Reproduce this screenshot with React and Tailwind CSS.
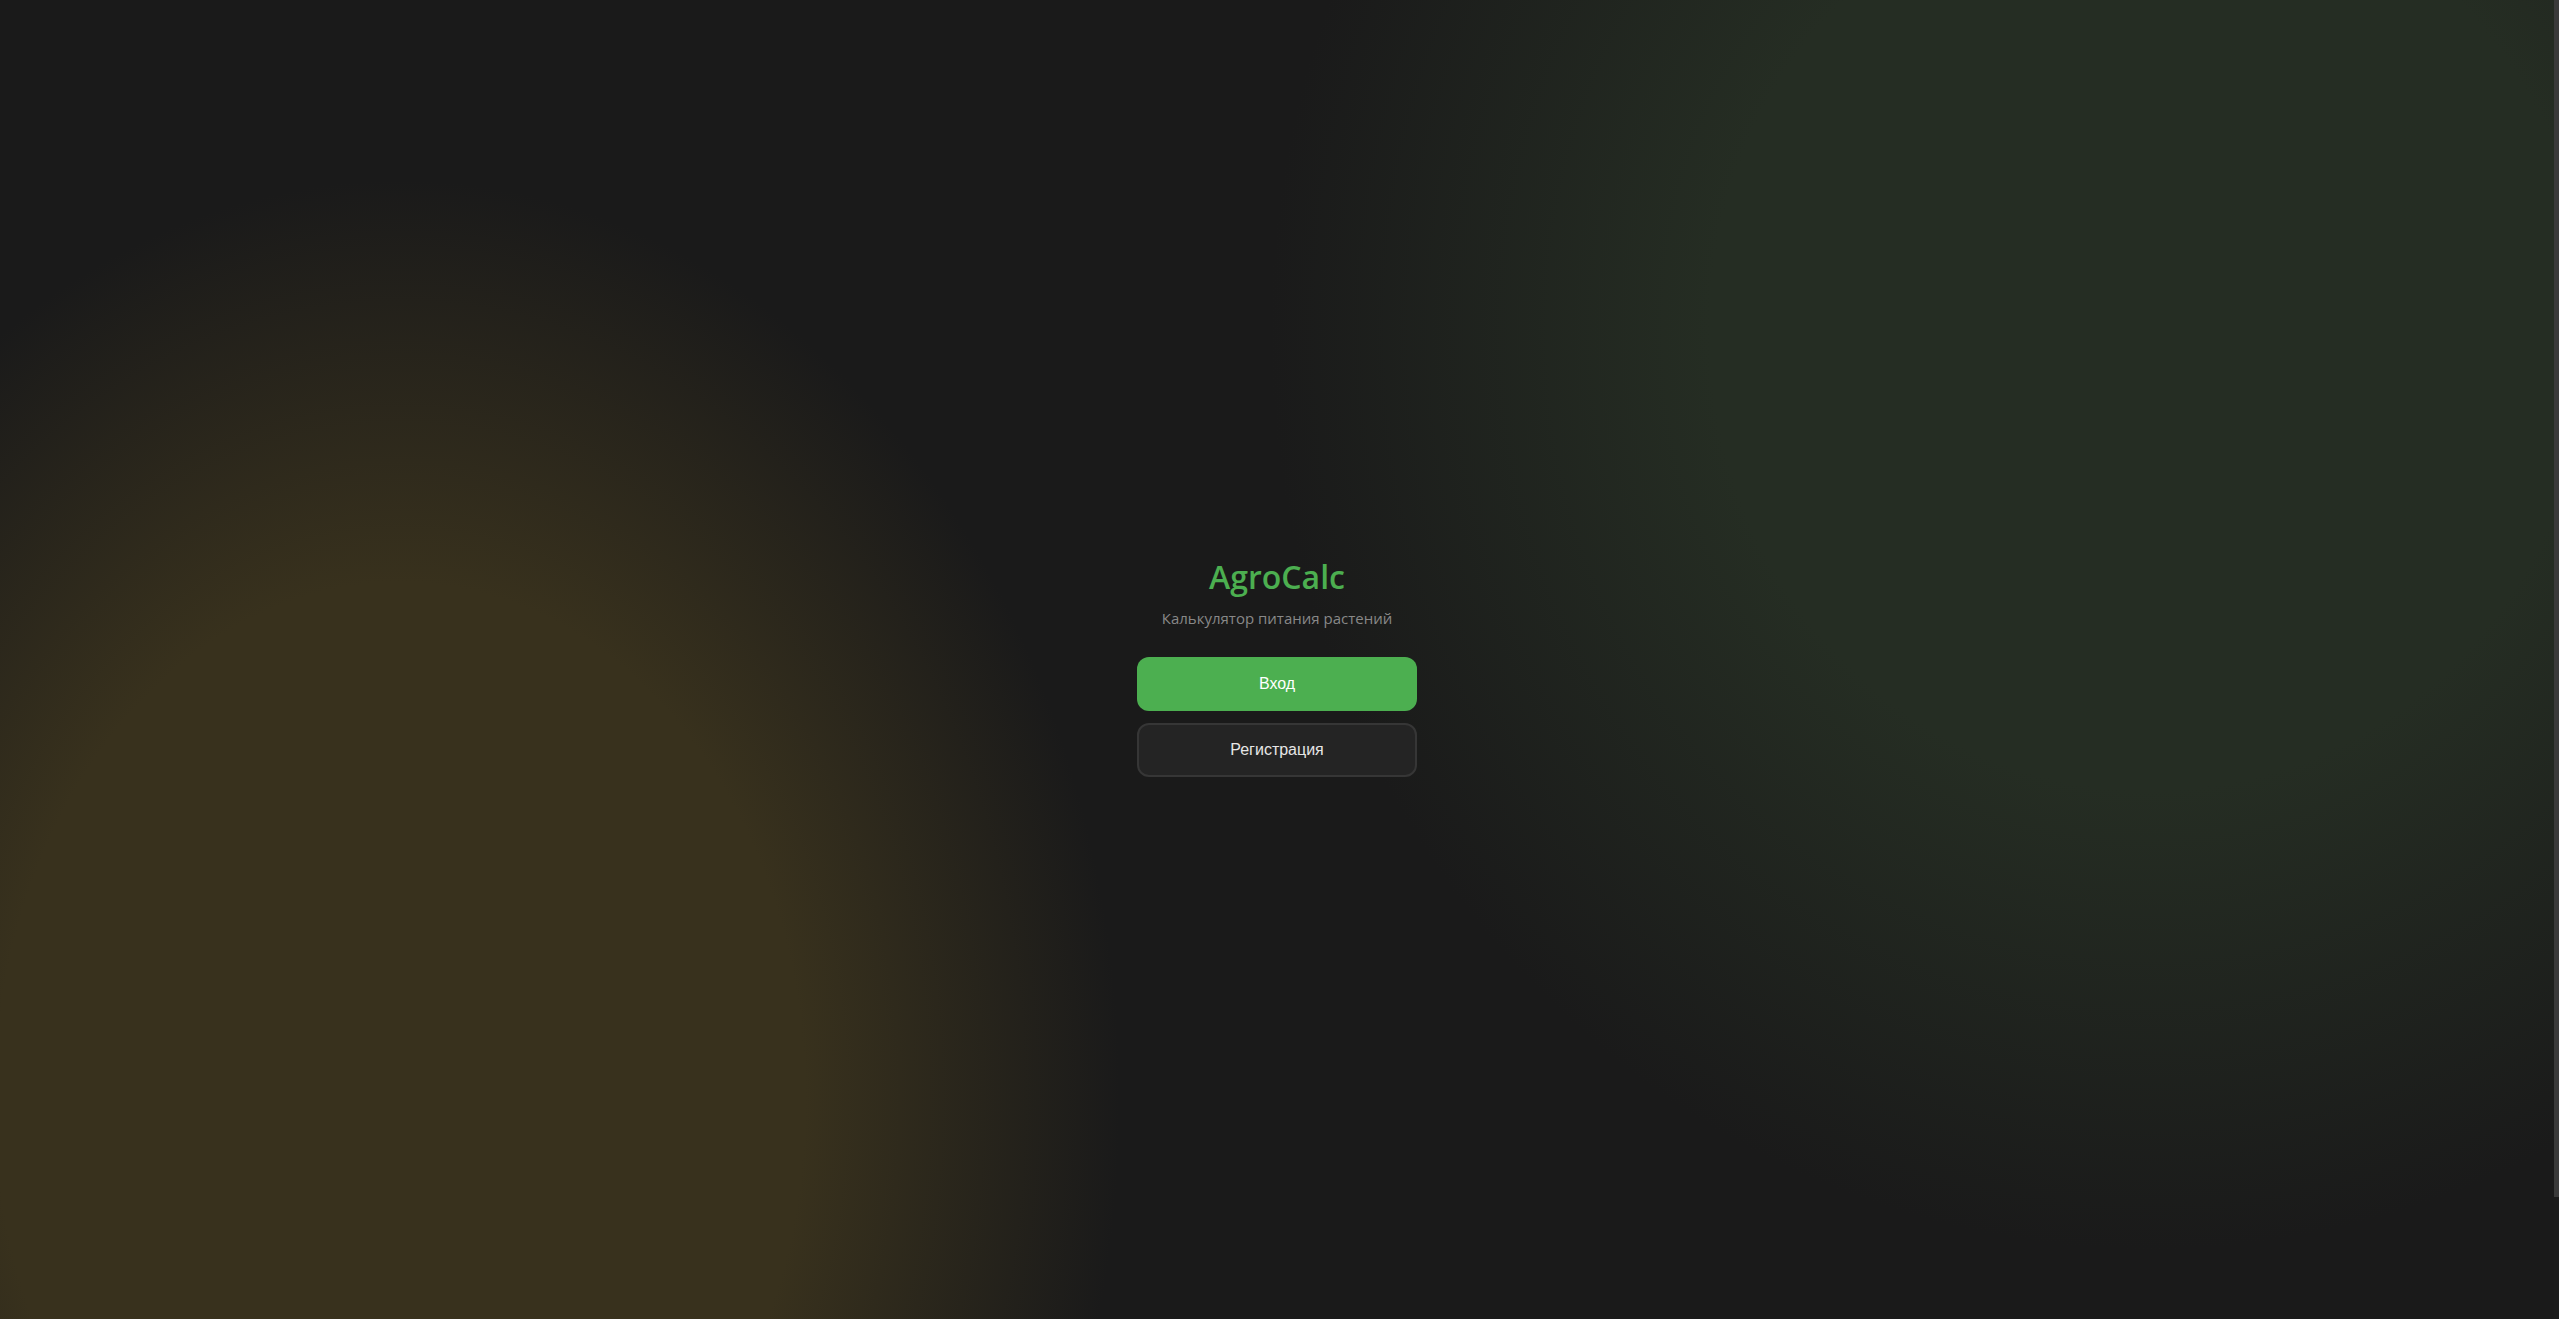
export default function App() {
  return (
    <div className="flex h-screen overflow-hidden bg-[#1a1a1a]">
      <main className="flex flex-1 flex-col items-center justify-center bg-[radial-gradient(ellipse_900px_1150px_at_400px_1100px,#38311d_0%,#38311d_45%,transparent_80%),radial-gradient(ellipse_1100px_1150px_at_2150px_330px,#252d23_0%,#252d23_40%,transparent_80%)] pt-4">
        <div className="flex w-[280px] flex-col items-center">
          <h1 className="font-['Open_Sans',sans-serif] text-[32px] leading-[1.2] font-semibold text-[#4caf50]">
            AgroCalc
          </h1>
          <p className="mt-[11px] font-['Open_Sans',sans-serif] text-[15px] leading-[20px] text-[#888888]">
            Калькулятор питания растений
          </p>
          <div className="mt-[29px] flex w-full flex-col gap-3">
            <button className="h-[54px] w-full rounded-xl bg-[#4caf50] font-['Liberation_Sans',Arial,sans-serif] text-base text-white">
              Вход
            </button>
            <button className="h-[54px] w-full rounded-xl border-2 border-[#363636] bg-[#242424] font-['Liberation_Sans',Arial,sans-serif] text-base text-[#e6e6e6]">
              Регистрация
            </button>
          </div>
        </div>
      </main>
      {/* scrollbar */}
      <div className="w-[5px] bg-[#1b1b1b]">
        <div className="h-[1197px] bg-[#3a3a3a]" />
      </div>
    </div>
  );
}
